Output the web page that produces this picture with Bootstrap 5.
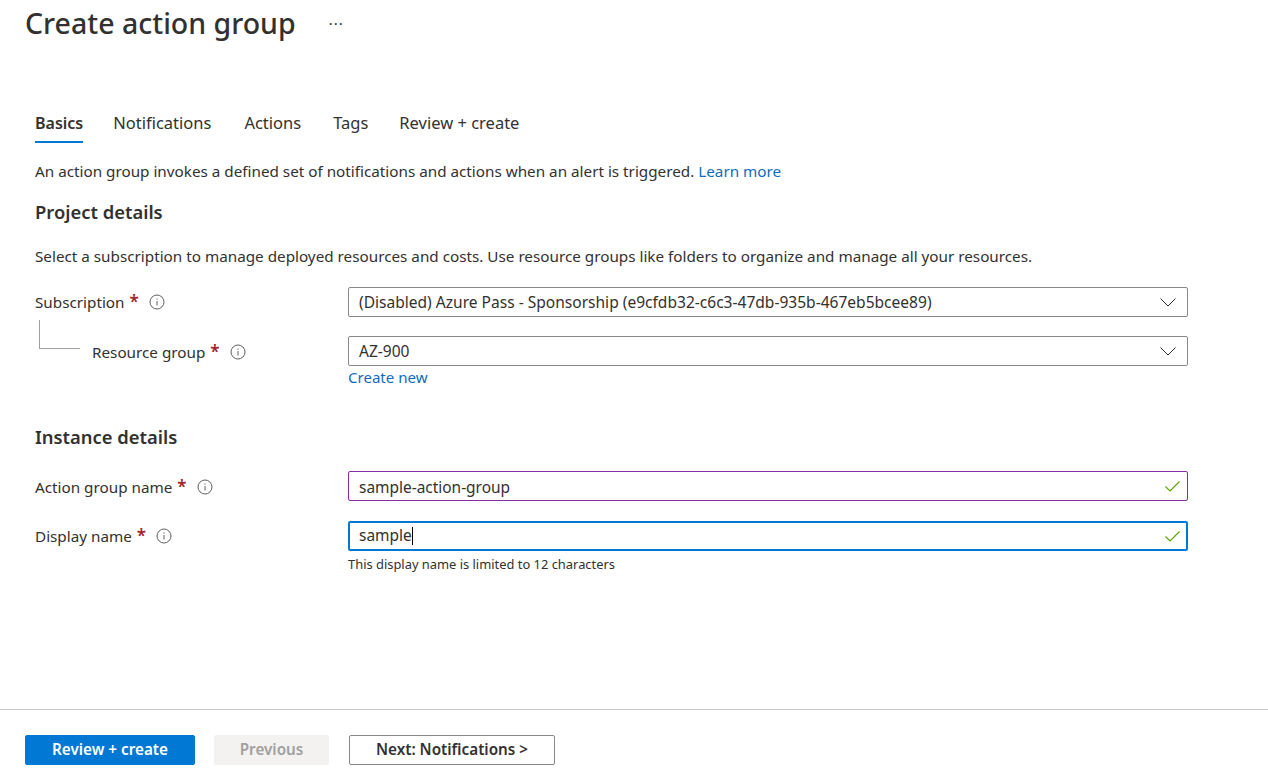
<!DOCTYPE html>
<html lang="en">
<head>
  <meta charset="UTF-8">
  <title>Create action group</title>
  <link href="https://cdn.jsdelivr.net/npm/bootstrap@5.3.2/dist/css/bootstrap.min.css" rel="stylesheet">
  <style>
    html, body { height: 100%; }
    body { font-family: "Noto Sans", "Open Sans", sans-serif; font-size: 15.25px; color: #323130; line-height: 20px; overflow: hidden; }
    a { color: #0f6cbd; text-decoration: none; }
    .page-wrap { height: 778px; }
    .blade-title { font-size: 28.5px; line-height: 36px; font-weight: 500; margin: 5px 0 0 25px; color: #323130; }
    .more-dots { margin-left: 33px; font-size: 15px; line-height: 36px; letter-spacing: 1px; margin-top: 5px; }
    .blade-tabs { margin: 60px 0 0 35px; }
    .blade-tabs .nav-link { color: #323130; padding: 12px 0 8px; font-size: 16.5px; line-height: 20px; border-bottom: 2px solid transparent; }
    .blade-tabs .nav-link.active { font-weight: 600; font-size: 16px; color: #323130; border-bottom-color: #0078d4; }
    .blade-tabs .nav-item:nth-child(2) { margin-left: 30px; }
    .blade-tabs .nav-item:nth-child(3) { margin-left: 33px; }
    .blade-tabs .nav-item:nth-child(4) { margin-left: 32px; }
    .blade-tabs .nav-item:nth-child(5) { margin-left: 31px; }
    .form-body { padding: 0 80px 0 35px; }
    .intro-text { margin: 18px 0 0; }
    .section-head { font-size: 18.4px; line-height: 24px; font-weight: 600; margin: 19px 0 0; }
    .section-head.instance-head { margin-top: 38px; }
    .sub-text { margin: 22px 0 0; }
    .field-row { display: flex; align-items: center; }
    .row-sub { margin-top: 21px; }
    .row-group { margin-top: 19px; }
    .row-name { margin-top: 22px; }
    .row-display { margin-top: 20px; }
    .field-label { width: 313px; flex: none; display: flex; align-items: center; }
    .field-label.nested { padding-left: 57px; padding-top: 1px; }
    .field-label.nudged { padding-top: 1px; }
    .req { color: #a4262c; font-weight: 600; font-size: 17px; margin-left: 5px; }
    .info-ico { margin-left: 10px; flex: none; }
    .field-ctl { flex: 1; position: relative; }
    .az-input, .az-input:focus { height: 30px; padding: 1px 10px 0; font-size: 15.45px; color: #323130; border: 1px solid #8a8886; border-radius: 2px; box-shadow: none; }
    .form-select.az-input { font-size: 15.55px; padding-top: 2px; padding-bottom: 0; background-image: url("data:image/svg+xml,%3Csvg xmlns='http://www.w3.org/2000/svg' viewBox='0 0 16 9'%3E%3Cpath fill='none' stroke='%23323130' stroke-width='1' d='M.5.5 8 8l7.5-7.5'/%3E%3C/svg%3E"); background-position: right 11px center; background-size: 16px 9px; }
    .az-input.dirty, .az-input.dirty:focus { border-color: #8a2da5; }
    .az-input.active-box { border: 2px solid #0078d4; padding: 0 9px; line-height: 25px; }
    .text-caret { display: inline-block; width: 1px; height: 18px; background: #000; vertical-align: -4px; }
    .ok-ico { position: absolute; right: 8px; top: 10px; }
    .create-link { margin-top: 1px; font-size: 15.05px; }
    .hint-text { font-size: 12.9px; line-height: 16px; margin-top: 5px; }
    .tree-line { position: absolute; left: 39px; top: 320px; width: 41px; height: 29px; border-left: 1px solid #a19f9d; border-bottom: 1px solid #a19f9d; }
    .blade-foot { margin-top: auto; border-top: 1px solid #c8c6c4; padding: 25px 25px 13px; display: flex; }
    .foot-btn { height: 30px; padding: 0 0 2px; font-size: 15.25px; font-weight: 600; line-height: 26px; border-radius: 2px; }
    .btn-review { width: 170px; background: #0078d4; border: 1px solid #0078d4; color: #fff; }
    .btn-prev, .btn-prev:disabled { width: 115px; margin-left: 19px; background: #f3f2f1; border: 1px solid #f3f2f1; color: #a19f9d; opacity: 1; }
    .btn-next { width: 206px; margin-left: 20px; background: #fff; border: 1px solid #8a8886; color: #323130; }
  </style>
</head>
<body>
<div class="page-wrap d-flex flex-column position-relative">
  <div class="d-flex align-items-center">
    <h1 class="blade-title">Create action group</h1>
    <span class="more-dots">···</span>
  </div>

  <ul class="nav blade-tabs">
    <li class="nav-item"><a class="nav-link active" href="#">Basics</a></li>
    <li class="nav-item"><a class="nav-link" href="#">Notifications</a></li>
    <li class="nav-item"><a class="nav-link" href="#">Actions</a></li>
    <li class="nav-item"><a class="nav-link" href="#">Tags</a></li>
    <li class="nav-item"><a class="nav-link" href="#">Review + create</a></li>
  </ul>

  <div class="form-body">
    <p class="intro-text">An action group invokes a defined set of notifications and actions when an alert is triggered. <a href="#">Learn more</a></p>

    <h2 class="section-head">Project details</h2>
    <p class="sub-text">Select a subscription to manage deployed resources and costs. Use resource groups like folders to organize and manage all your resources.</p>

    <div class="field-row row-sub">
      <div class="field-label">Subscription <span class="req">*</span>
        <svg class="info-ico" width="16" height="16" viewBox="0 0 16 16" fill="none" stroke="#605e5c"><circle cx="8" cy="8" r="7"/><path d="M8 7v4.5M8 4.5v1.2"/></svg>
      </div>
      <div class="field-ctl">
        <select class="form-select az-input"><option>(Disabled) Azure Pass - Sponsorship (e9cfdb32-c6c3-47db-935b-467eb5bcee89)</option></select>
      </div>
    </div>

    <div class="tree-line"></div>
    <div class="field-row row-group">
      <div class="field-label nested">Resource group <span class="req">*</span>
        <svg class="info-ico" width="16" height="16" viewBox="0 0 16 16" fill="none" stroke="#605e5c"><circle cx="8" cy="8" r="7"/><path d="M8 7v4.5M8 4.5v1.2"/></svg>
      </div>
      <div class="field-ctl">
        <select class="form-select az-input"><option>AZ-900</option></select>
      </div>
    </div>
    <div class="field-row">
      <div class="field-label"></div>
      <a href="#" class="create-link">Create new</a>
    </div>

    <h2 class="section-head instance-head">Instance details</h2>

    <div class="field-row row-name">
      <div class="field-label nudged">Action group name <span class="req">*</span>
        <svg class="info-ico" width="16" height="16" viewBox="0 0 16 16" fill="none" stroke="#605e5c"><circle cx="8" cy="8" r="7"/><path d="M8 7v4.5M8 4.5v1.2"/></svg>
      </div>
      <div class="field-ctl">
        <input class="form-control az-input dirty" type="text" value="sample-action-group">
        <svg class="ok-ico" width="15" height="11" viewBox="0 0 15 11" fill="none" stroke="#57a300" stroke-width="1.1"><path d="M.5 5.5 5 10 14.5.5"/></svg>
      </div>
    </div>

    <div class="field-row row-display">
      <div class="field-label">Display name <span class="req">*</span>
        <svg class="info-ico" width="16" height="16" viewBox="0 0 16 16" fill="none" stroke="#605e5c"><circle cx="8" cy="8" r="7"/><path d="M8 7v4.5M8 4.5v1.2"/></svg>
      </div>
      <div class="field-ctl">
        <div class="form-control az-input active-box">sample<span class="text-caret"></span></div>
        <svg class="ok-ico" width="15" height="11" viewBox="0 0 15 11" fill="none" stroke="#57a300" stroke-width="1.1"><path d="M.5 5.5 5 10 14.5.5"/></svg>
      </div>
    </div>
    <div class="field-row">
      <div class="field-label"></div>
      <div class="hint-text">This display name is limited to 12 characters</div>
    </div>
  </div>

  <div class="blade-foot">
    <button class="btn foot-btn btn-review">Review + create</button>
    <button class="btn foot-btn btn-prev" disabled>Previous</button>
    <button class="btn foot-btn btn-next">Next: Notifications &gt;</button>
  </div>
</div>
<script src="https://cdn.jsdelivr.net/npm/bootstrap@5.3.2/dist/js/bootstrap.bundle.min.js"></script>
</body>
</html>
